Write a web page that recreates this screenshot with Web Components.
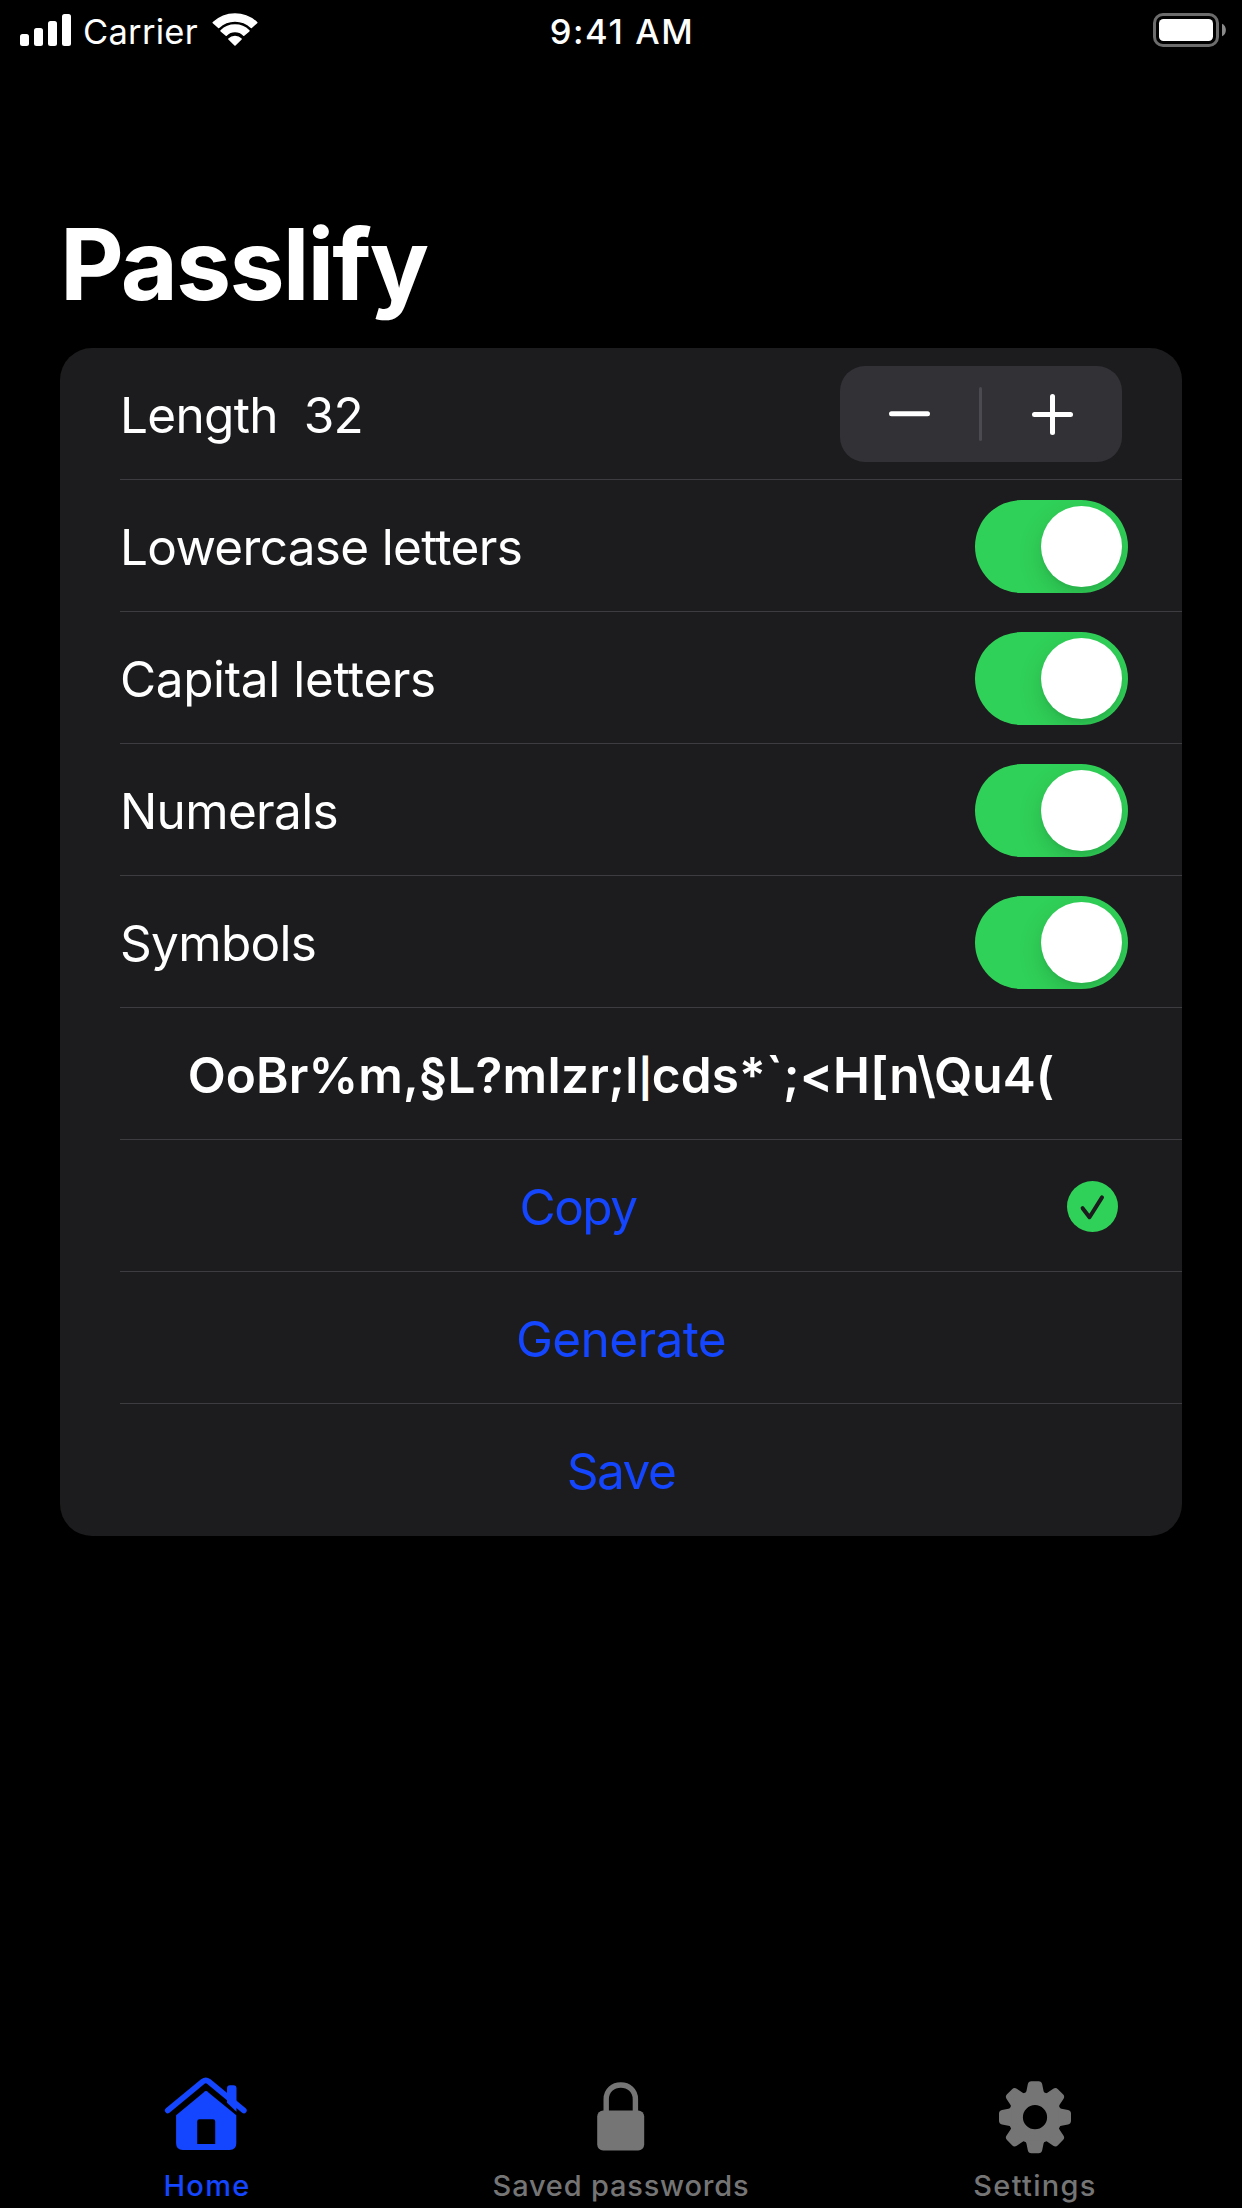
<!DOCTYPE html>
<html lang="en">
<head>
<meta charset="utf-8">
<title>Passlify</title>
<style>
  html, body { margin: 0; background: #000; }
  body { font-family: Inter, "Liberation Sans", sans-serif; color: #fff; }
</style>
</head>
<body>
<pass-app></pass-app>

<script>
const define = (name, html, setup) => {
  const template = document.createElement('template');
  template.innerHTML = html;
  customElements.define(name, class extends HTMLElement {
    constructor() {
      super();
      this.attachShadow({ mode: 'open' }).appendChild(template.content.cloneNode(true));
    }
    connectedCallback() { if (setup) setup(this, this.shadowRoot); }
  });
};

define('status-bar', `
  <style>
    :host { display: grid; grid-template-columns: 1fr auto 1fr; height: 60px; font-size: 34.5px; line-height: 60px; }
    .left { display: flex; padding-left: 20px; }
    .carrier { margin: 2px 0 -2px 11px; letter-spacing: .27px; width: 129px; }
    .time { font-weight: 500; letter-spacing: 1.6px; padding: 2px 0 0 2px; height: 58px; }
    .right { display: flex; justify-content: flex-end; padding-right: 15px; }
    svg { display: block; }
  </style>
  <div class="left">
    <svg width="52" height="60" fill="#fff">
      <rect x="0" y="34" width="9" height="12" rx="2.5"/>
      <rect x="14" y="28" width="9" height="18" rx="2.5"/>
      <rect x="28" y="21" width="9" height="25" rx="2.5"/>
      <rect x="42" y="14" width="9" height="32" rx="2.5"/>
    </svg>
    <span class="carrier">Carrier</span>
    <svg width="46" height="60" fill="#fff" stroke="#fff" stroke-width="1.6" stroke-linejoin="round">
      <path d="M1.3 22.6A31.5 31.5 0 0 1 44.7 22.6L39.3 27.4A23.5 23.5 0 0 0 6.7 27.4Z"/>
      <path d="M9.1 30.8A19.8 19.8 0 0 1 36.9 30.8L31.8 35.2A12.4 12.4 0 0 0 14.2 35.2Z"/>
      <path d="M16.9 39A8.6 8.6 0 0 1 29.1 39L23 45Z"/>
    </svg>
  </div>
  <div class="time">9:41 AM</div>
  <div class="right">
    <svg width="74" height="60">
      <rect x="1.5" y="14.5" width="63" height="31" rx="8.5" fill="none" stroke="#6c6c6c" stroke-width="3"/>
      <rect x="6" y="19" width="54" height="22" rx="4.5" fill="#fff"/>
      <path d="M69 23.7C74.2 26 74.2 34 69 36.3Z" fill="#8a8a8a"/>
    </svg>
  </div>
`);

define('list-row', `
  <style>
    :host { display: flex; align-items: center; box-sizing: border-box; height: 132px; margin-left: 60px;
            border-bottom: 1px solid #3d3d41; font-size: 49.5px; line-height: 60px; }
    :host([last]) { border-bottom-color: transparent; }
    .label { flex: 1; padding-top: 2px; }
    :host([center]) .label { text-align: center; }
    :host([strong]) { font-weight: 600; letter-spacing: .09px; }
    :host([action]) { color: #1446ff; }
  </style>
  <div class="label"><slot></slot></div>
  <slot name="accessory"></slot>
`);

define('value-stepper', `
  <style>
    :host { display: flex; align-items: center; box-sizing: border-box;
            width: 282px; height: 96px; margin-right: 60px; border-radius: 25px; background: #323136; }
    svg { display: block; }
    i { width: 3px; height: 54px; border-radius: 1.5px; background: #4b4a50; }
  </style>
  <svg width="139" height="96"><rect x="49" y="45.2" width="41" height="5" rx="2.5" fill="#fff"/></svg>
  <i></i>
  <svg width="140" height="96" fill="#fff"><rect x="50" y="46" width="41" height="5" rx="2.5"/><rect x="68" y="28" width="5" height="41" rx="2.5"/></svg>
`);

define('toggle-switch', `
  <style>
    :host { display: flex; justify-content: flex-end; box-sizing: border-box; width: 153px; height: 93px; padding: 6px;
            margin: 2px 54px 0 0; border-radius: 46.5px; background: #30d158; overflow: hidden; }
    i { width: 81px; height: 81px; border-radius: 50%; background: #fff; box-shadow: 0 9px 24px rgba(0,0,0,.15), 0 3px 3px rgba(0,0,0,.04); }
  </style>
  <i></i>
`);

define('copied-badge', `
  <style>:host { display: block; margin: 2px 64px 0 28px; line-height: 0; } svg { display: block; }</style>
  <svg width="51" height="51" viewBox="0 0 51 51">
    <circle cx="25.5" cy="25.5" r="25.5" fill="#30d158"/>
    <path d="M15.6 27.2 22.5 36.2 35 16.4" fill="none" stroke="#1c1c1e" stroke-width="4" stroke-linecap="round" stroke-linejoin="round"/>
  </svg>
`);

define('settings-card', `
  <style>:host { display: flex; flex-direction: column; margin: 0 60px; border-radius: 32px; background: #1c1c1e; }</style>
  <slot></slot>
`);

define('tab-item', `
  <style>
    :host { display: flex; flex-direction: column; align-items: center; flex: 1; color: #757575;
            font-size: 29px; font-weight: 500; line-height: 36px; letter-spacing: .8px; }
    :host([active]) { color: #1446ff; }
    .icon { height: 108px; }
  </style>
  <div class="icon"><slot name="icon"></slot></div>
  <div class="label"><slot></slot></div>
`);

const icons = {
  home: `<svg width="92" height="100" viewBox="0 1.2 92 100" fill="currentColor">
      <path d="M6.9 53.2 42 24.2Q45 22 48 24.2L83.1 53.2" transform="translate(-.2 -1.5)" fill="none" stroke="currentColor" stroke-width="5.6" stroke-linecap="round"/>
      <path d="M66 44V29.5Q66 26.5 69 26.5H72.5Q75.5 26.5 75.5 29.5V53Z"/>
      <path fill-rule="evenodd" d="M47.4 33.6 75.3 56.5V84.5Q75.3 91.2 68.6 91.2H21.8Q15.1 91.2 15.1 84.5V56.5L42.6 33.6Q45 30.9 47.4 33.6ZM38.5 60.5Q36.2 60.5 36.2 62.8V85.2H54.2V62.8Q54.2 60.5 51.9 60.5Z"/>
    </svg>`,
  lock: `<svg width="61" height="100" viewBox="0 .8 61 100" fill="currentColor">
      <path d="M15.2 53V40C15.2 31 22 25.8 29.8 25.8S44.4 31 44.4 40V53" fill="none" stroke="currentColor" stroke-width="5.4"/>
      <rect x="6.2" y="51.2" width="47" height="40" rx="6"/>
    </svg>`,
  gear: `<svg width="80" height="100" viewBox="-40 -57.2 80 100" fill="currentColor">
      <circle r="19.3" fill="none" stroke="currentColor" stroke-width="14.4"/>
      ${[0, 45, 90, 135, 180, 225, 270, 315].map(a => `<path transform="rotate(${a})" d="M-10.4 -23.5Q-8.8 -24.5 -8.5 -26.5L-7.2 -33Q-6.6 -36 -3.6 -36H3.6Q6.6 -36 7.2 -33L8.5 -26.5Q8.8 -24.5 10.4 -23.5Z"/>`).join('')}
    </svg>`
};

define('tab-icon', `<style>:host { display: block; } svg { display: block; }</style><div></div>`,
  (host, root) => { root.querySelector('div').innerHTML = icons[host.getAttribute('name')]; });

define('tab-bar', `
  <style>:host { display: flex; height: 148px; }</style>
  <slot></slot>
`);

define('pass-app', `
  <style>
    :host { display: flex; flex-direction: column; width: 1242px; height: 2208px; background: #000; overflow: hidden; }
    h1 { margin: 144px 0 0 60px; height: 144px; line-height: 120px; font-size: 98.6px; font-weight: 700; letter-spacing: -1.9px; }
    settings-card { margin-bottom: auto; }
    .fit1 { letter-spacing: -.68px; } .fit2 { letter-spacing: -.38px; }
    .fit3 { letter-spacing: -1.5px; } .fit4 { letter-spacing: -.6px; }
    .value { letter-spacing: -1px; margin-left: 26px; }
    .bar { font-size: 38px; font-weight: 700; line-height: 0; vertical-align: 1px; letter-spacing: -.6px; }
    .inset { padding-right: 60px; }
    .wide { letter-spacing: 1.3px; }
  </style>
  <status-bar></status-bar>
  <h1>Passlify</h1>
  <settings-card>
    <list-row><span class="fit1">Length</span><span class="value">32</span><value-stepper slot="accessory"></value-stepper></list-row>
    <list-row class="fit1">Lowercase letters<toggle-switch slot="accessory"></toggle-switch></list-row>
    <list-row class="fit2">Capital letters<toggle-switch slot="accessory"></toggle-switch></list-row>
    <list-row class="fit1">Numerals<toggle-switch slot="accessory"></toggle-switch></list-row>
    <list-row class="fit1">Symbols<toggle-switch slot="accessory"></toggle-switch></list-row>
    <list-row center strong><span class="inset">OoBr%m,§L?mIzr;l<span class="bar">|</span>cds*\`;&lt;H[n\\Qu4(</span></list-row>
    <list-row center action class="fit3"><span style="padding-right:3px">Copy</span><copied-badge slot="accessory"></copied-badge></list-row>
    <list-row center action class="fit4"><span class="inset">Generate</span></list-row>
    <list-row center action last class="fit3"><span class="inset">Save</span></list-row>
  </settings-card>
  <tab-bar>
    <tab-item active><tab-icon slot="icon" name="home"></tab-icon><span class="wide">Home</span></tab-item>
    <tab-item><tab-icon slot="icon" name="lock"></tab-icon>Saved passwords</tab-item>
    <tab-item><tab-icon slot="icon" name="gear"></tab-icon><span class="wide">Settings</span></tab-item>
  </tab-bar>
`);
</script>
</body>
</html>
